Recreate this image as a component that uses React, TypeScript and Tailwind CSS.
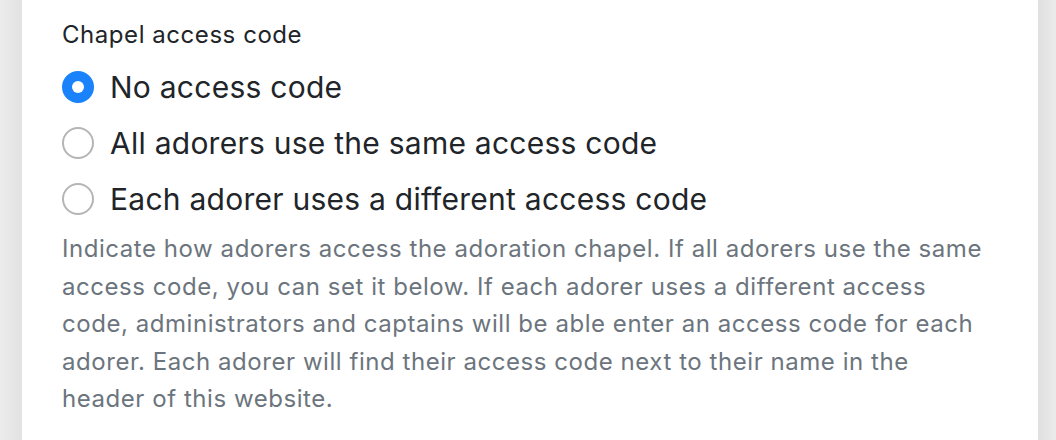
import React from "react";

function Radio({ checked }: { checked?: boolean }) {
  if (checked) {
    return (
      <span className="flex h-[32px] w-[32px] shrink-0 items-center justify-center rounded-full bg-[#1a82fb]">
        <span className="h-[12px] w-[12px] rounded-full bg-white" />
      </span>
    );
  }
  return <span className="h-[32px] w-[32px] shrink-0 rounded-full border-2 border-[#b5b5b5] bg-white" />;
}

export default function App() {
  const options = [
    { label: "No access code", checked: true },
    { label: "All adorers use the same access code" },
    { label: "Each adorer uses a different access code" },
  ];
  return (
    <div className="flex h-[440px] w-[1056px] overflow-hidden bg-white" style={{ fontFamily: "Inter, 'Noto Sans', sans-serif" }}>
      <div className="w-[22px] shrink-0 bg-gradient-to-r from-[#ececec] to-[#e2e2e2]" />
      <div className="flex-1 pl-[40px] pr-[40px] pt-[17px]">
        <div className="h-[36px] text-[24px] leading-[36px] tracking-[0.55px] text-[#212529]">Chapel access code</div>
        <div className="mt-[6px] flex flex-col">
          {options.map((o) => (
            <div key={o.label} className="flex h-[56px] items-center gap-[16px]">
              <Radio checked={o.checked} />
              <span className="text-[30px] leading-[40px] tracking-[0.25px] text-[#212529]">{o.label}</span>
            </div>
          ))}
        </div>
        <p className="mt-[3px] text-[24px] leading-[37.5px] tracking-[0.55px] text-[#6c757d]">
          Indicate how adorers access the adoration chapel. If all adorers use the same access code, you can set it below. If each adorer uses a different access code, administrators and captains will be able enter an access code for each adorer. Each adorer will find their access code next to their name in the header of this website.
        </p>
      </div>
      <div className="w-[18px] shrink-0 bg-gradient-to-r from-[#e0e0e0] to-[#ebebeb]" />
    </div>
  );
}
